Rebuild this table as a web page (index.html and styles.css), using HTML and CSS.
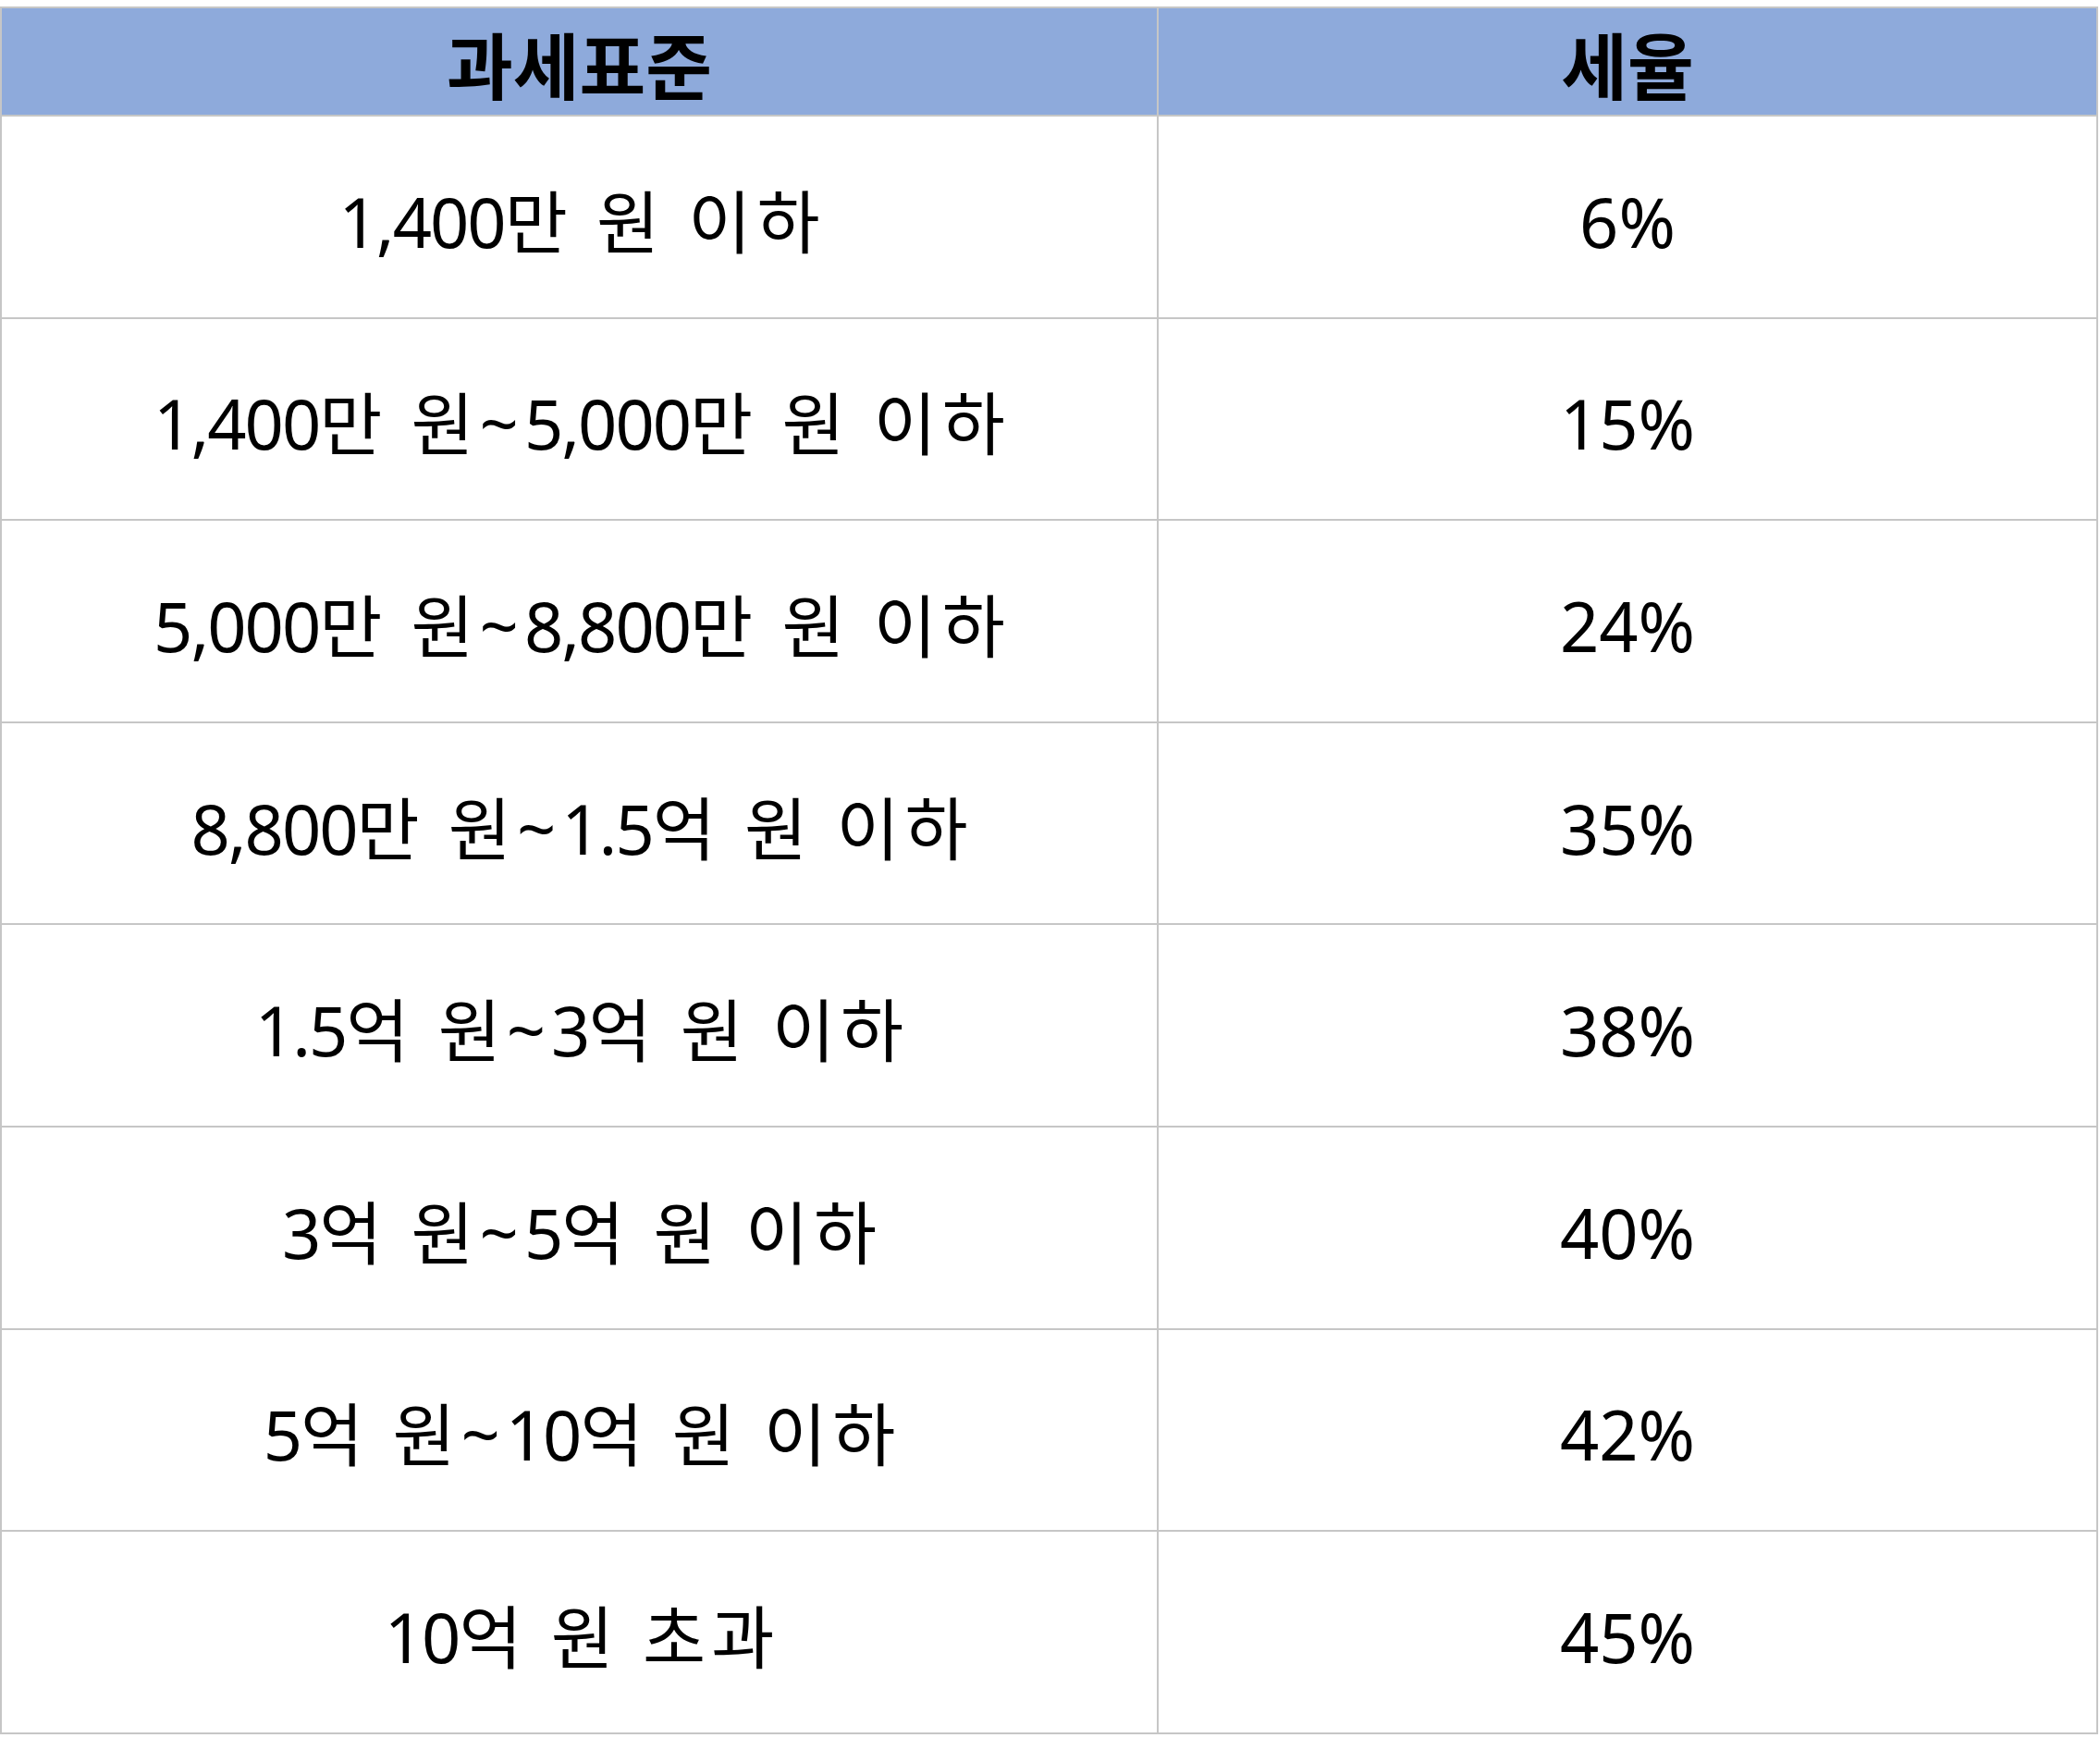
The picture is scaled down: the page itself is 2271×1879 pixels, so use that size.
FILE: index.html
```html
<!DOCTYPE html>
<html lang="ko">
<head>
<meta charset="utf-8">
<link rel="stylesheet" href="styles.css">
</head>
<body>
<table class="tax-table">
  <colgroup>
    <col class="col-base">
    <col class="col-rate">
  </colgroup>
  <thead>
    <tr class="head-row">
      <th>과세표준</th>
      <th>세율</th>
    </tr>
  </thead>
  <tbody>
    <tr><td class="base"><span class="num">1,400</span>만 원 이하</td><td class="rate">6%</td></tr>
    <tr><td class="base"><span class="num">1,400</span>만 원~<span class="num">5,000</span>만 원 이하</td><td class="rate">15%</td></tr>
    <tr><td class="base"><span class="num">5,000</span>만 원~<span class="num">8,800</span>만 원 이하</td><td class="rate">24%</td></tr>
    <tr><td class="base"><span class="num">8,800</span>만 원~<span class="num">1.5</span>억 원 이하</td><td class="rate">35%</td></tr>
    <tr><td class="base"><span class="num">1.5</span>억 원~<span class="num">3</span>억 원 이하</td><td class="rate">38%</td></tr>
    <tr><td class="base"><span class="num">3</span>억 원~<span class="num">5</span>억 원 이하</td><td class="rate">40%</td></tr>
    <tr><td class="base"><span class="num">5</span>억 원~<span class="num">10</span>억 원 이하</td><td class="rate">42%</td></tr>
    <tr><td class="base"><span class="num">10</span>억 원 초과</td><td class="rate">45%</td></tr>
  </tbody>
</table>
</body>
</html>
```

FILE: styles.css
```css
html, body {
  margin: 0;
  padding: 0;
  background: #ffffff;
}

body {
  padding-top: 7px;
  font-family: "Noto Sans", "Noto Sans CJK KR", sans-serif;
  color: #000000;
}

.tax-table {
  width: 2269px;
  border-collapse: collapse;
  table-layout: fixed;
}

.col-base {
  width: 1251px;
}

.tax-table th,
.tax-table td {
  border: 2px solid #c6c6c6;
  text-align: center;
  vertical-align: middle;
  padding: 0;
  box-sizing: border-box;
}

.head-row th {
  height: 117px;
  background: #8eaadb;
  font-size: 78px;
  line-height: 90px;
  font-weight: 700;
  padding-top: 11px;
}

.tax-table td {
  height: 218.6px;
  font-size: 74px;
  line-height: 90px;
  font-weight: 400;
  padding-top: 11px;
}

.tax-table td.base {
  letter-spacing: 6px;
  padding-left: 6px;
}

.tax-table td.base .num {
  letter-spacing: -2px;
}

.tax-table td.rate {
  letter-spacing: 0;
}
```
